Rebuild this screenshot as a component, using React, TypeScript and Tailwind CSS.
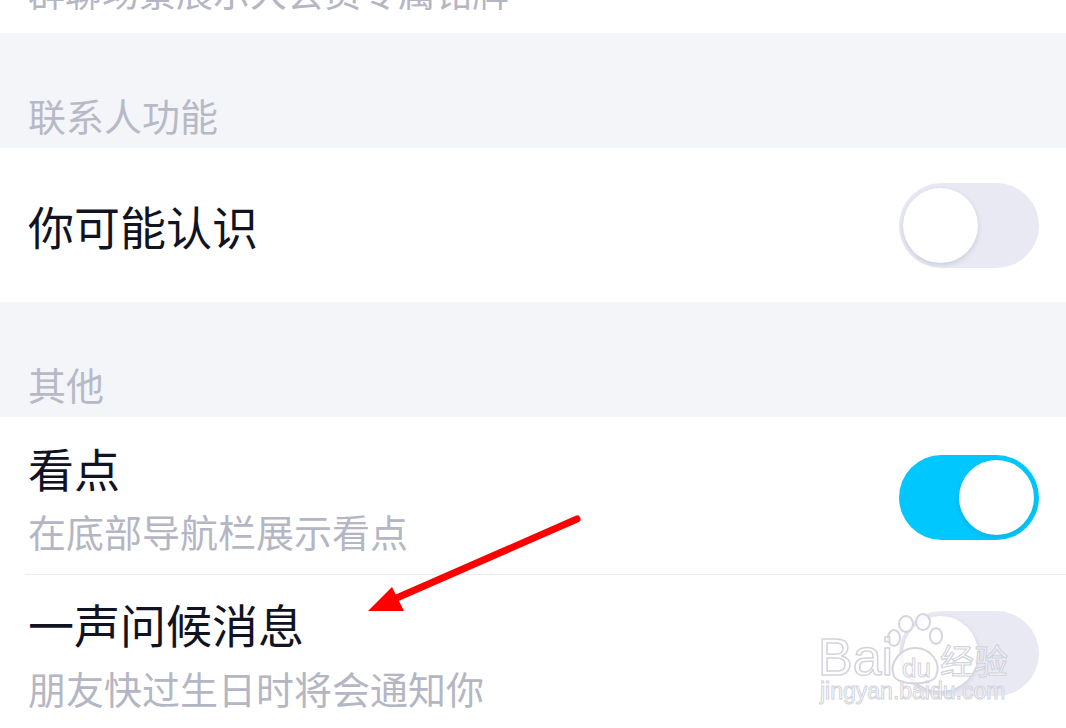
import React, { useState } from 'react';

const Toggle = ({ on, onChange }: { on: boolean; onChange: () => void }) => (
  <button
    onClick={onChange}
    className={`relative shrink-0 w-[140px] h-[85px] rounded-full ${on ? 'bg-[#00c8ff]' : 'bg-[#e8e9f3]'}`}
  >
    <span
      className={`absolute top-[5px] w-[75px] h-[75px] rounded-full bg-white shadow-[0_2px_5px_rgba(60,70,110,0.18)] ${on ? 'left-[60px]' : 'left-[4px]'}`}
    />
  </button>
);

const SectionHeader = ({ title }: { title: string }) => (
  <div className="h-[115px] bg-[#f4f5f9] flex items-end px-[28px] pb-[14px]">
    <span className="text-[38px] leading-[38px] text-[#b8b9c6]">{title}</span>
  </div>
);

// 百度经验水印
const Watermark = () => (
  <div className="absolute left-[816px] top-[606px] w-[220px] h-[110px] pointer-events-none whitespace-nowrap">
    <svg className="absolute left-[64px] top-[4px]" width="70" height="80" viewBox="0 0 70 80">
      <g fill="rgba(255,255,255,0.75)" stroke="#d4d5dd" strokeWidth="2">
        <ellipse cx="14" cy="28" rx="6" ry="8" />
        <ellipse cx="26" cy="14" rx="7" ry="8" />
        <ellipse cx="43" cy="12" rx="7" ry="8" />
        <ellipse cx="56" cy="26" rx="6" ry="8" />
        <path d="M14 66 C8 52 22 38 35 38 C50 38 62 52 56 66 C52 76 18 76 14 66 Z" />
      </g>
    </svg>
    <span className="absolute left-[2px] top-[25px] text-[52px] leading-[52px] font-['Liberation_Sans',sans-serif] text-white/75 [-webkit-text-stroke:1.5px_#d2d3db]">
      Bai
    </span>
    <span className="absolute left-[86px] top-[49px] text-[26px] leading-[26px] font-['Liberation_Sans',sans-serif] text-white/75 [-webkit-text-stroke:1px_#d2d3db]">
      du
    </span>
    <span className="absolute left-[124px] top-[37px] text-[34px] leading-[34px] text-white/75 [-webkit-text-stroke:1.2px_#d2d3db]">
      经验
    </span>
    <span className="absolute left-[4px] top-[74px] text-[23px] leading-[23px] font-['Liberation_Sans',sans-serif] text-white/75 [-webkit-text-stroke:1px_#d2d3db]">
      jingyan.baidu.com
    </span>
  </div>
);

const App = () => {
  const [mayKnow, setMayKnow] = useState(false);
  const [kandian, setKandian] = useState(true);
  const [greeting, setGreeting] = useState(false);

  return (
    <div className="relative w-[1066px] h-[728px] overflow-hidden bg-white font-['Noto_Sans_CJK_SC','Noto_Sans',sans-serif]">
      {/* 上一项的尾部 */}
      <div className="h-[33px] overflow-hidden px-[28px]">
        <div className="mt-[-27px] text-[37px] leading-[37px] text-[#b5b6c3] whitespace-nowrap">
          群聊场景展示大会员专属铭牌
        </div>
      </div>

      <SectionHeader title="联系人功能" />
      <div className="h-[154px] flex items-center justify-between px-[27px] bg-white">
        <span className="pl-[1px] text-[46px] leading-[46px] text-[#111322]">你可能认识</span>
        <Toggle on={mayKnow} onChange={() => setMayKnow(!mayKnow)} />
      </div>

      <SectionHeader title="其他" />
      <div className="bg-white">
        <div className="flex items-center justify-between pl-[28px] pr-[27px] pt-[27px] pb-[24px]">
          <div className="flex flex-col">
            <span className="text-[46px] leading-[46px] text-[#111322]">看点</span>
            <span className="mt-[22px] text-[38px] leading-[38px] text-[#b5b6c3]">在底部导航栏展示看点</span>
          </div>
          <Toggle on={kandian} onChange={() => setKandian(!kandian)} />
        </div>
        <div className="ml-[25px] h-px bg-[#ebecf2]" />
        <div className="flex items-center justify-between pl-[28px] pr-[27px] pt-[25px] pb-[24px]">
          <div className="flex flex-col">
            <span className="text-[46px] leading-[46px] text-[#111322]">一声问候消息</span>
            <span className="mt-[23px] text-[38px] leading-[38px] text-[#b5b6c3]">朋友快过生日时将会通知你</span>
          </div>
          <Toggle on={greeting} onChange={() => setGreeting(!greeting)} />
        </div>
      </div>

      {/* 标注箭头 */}
      <svg className="absolute left-0 top-0 pointer-events-none" width="1066" height="728">
        <line x1="577" y1="519" x2="392" y2="600" stroke="#ff0000" strokeWidth="7" strokeLinecap="round" />
        <polygon points="368,611 392,587 404,611" fill="#ff0000" />
      </svg>

      <Watermark />
    </div>
  );
};

export default App;
